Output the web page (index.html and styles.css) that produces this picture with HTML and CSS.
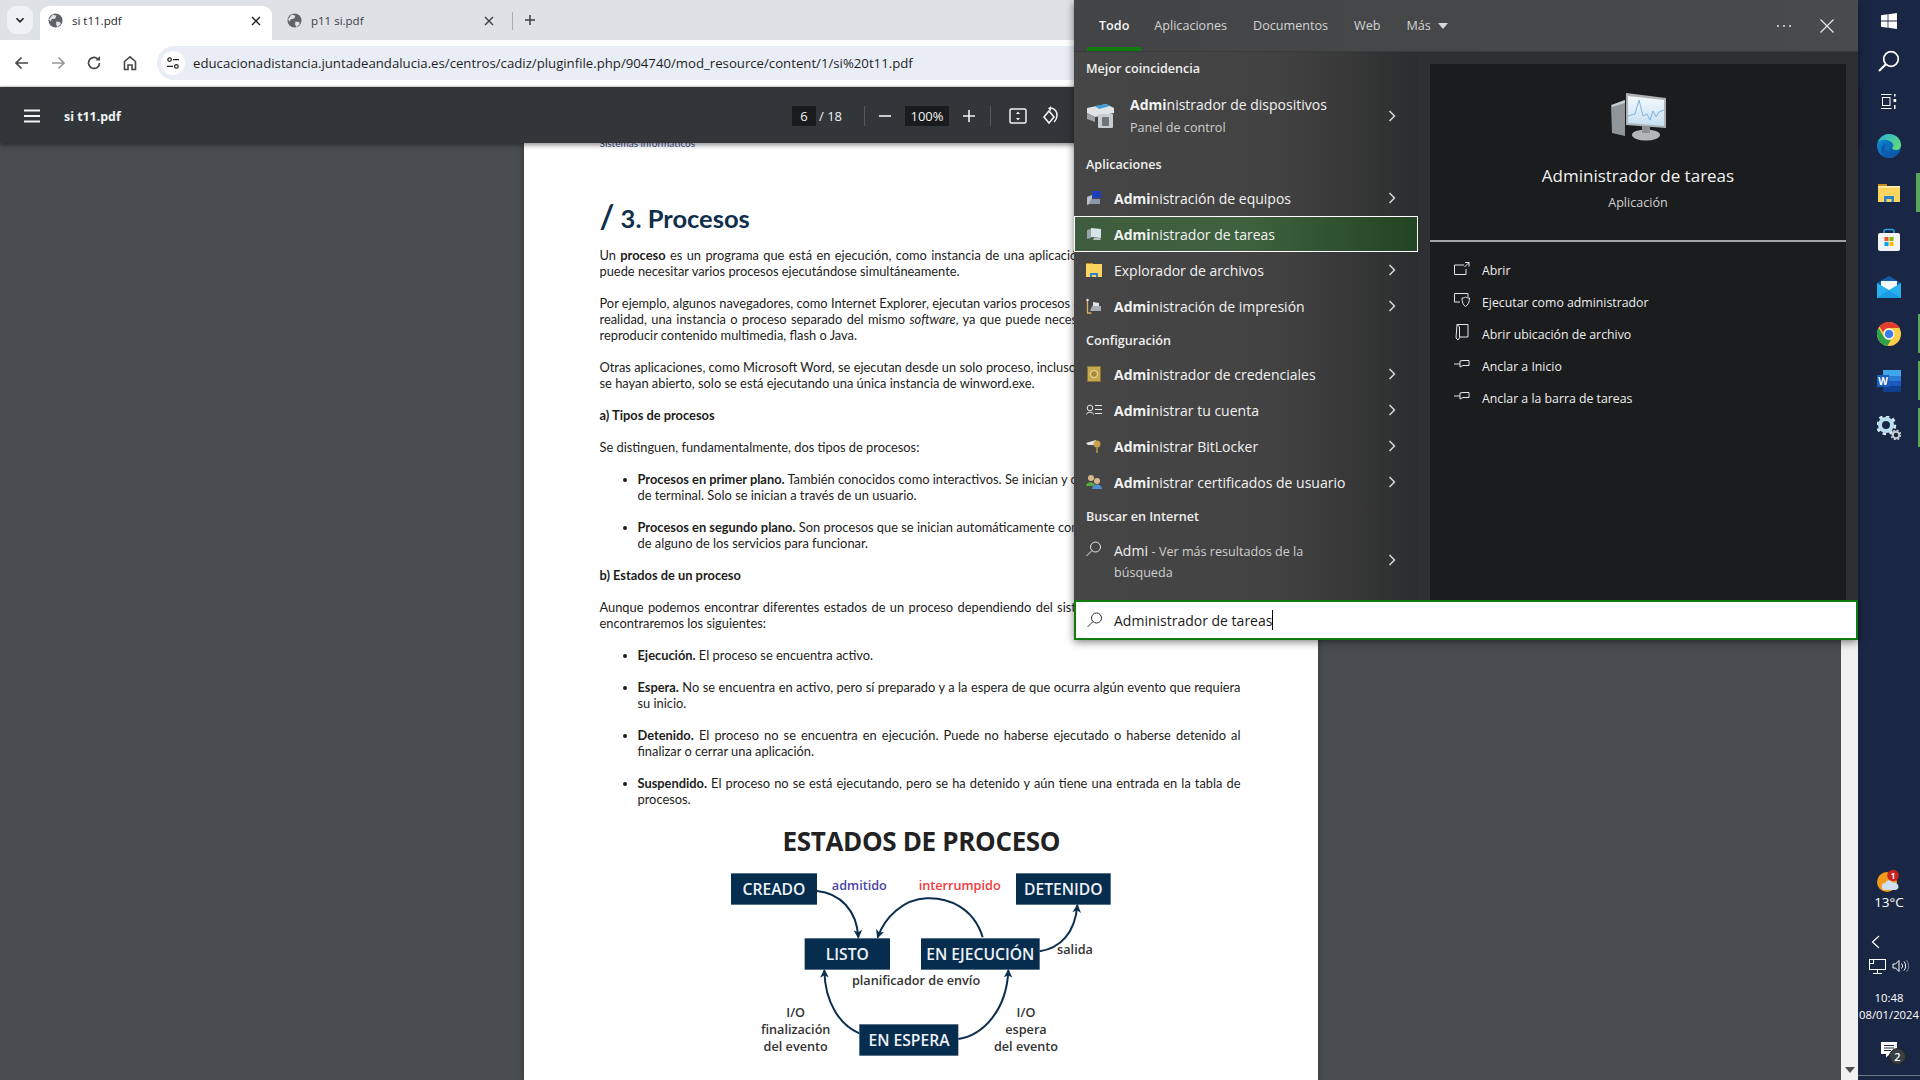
FILE: index.html
```html
<!DOCTYPE html>
<html lang="es">
<head>
    <meta charset="utf-8">
    <title>si t11.pdf</title>
    <link rel="stylesheet" href="styles.css">
</head>
<body>
<div class="desktop">
    <div class="browser">
        <!-- tab strip -->
        <div class="tabstrip">
            <div class="tab-list-btn">
                <svg width="10" height="10" viewBox="0 0 10 10"><path d="M1.500 3.200 5 6.800l3.500-3.600" fill="none" stroke="#1f1f1f" stroke-width="1.600"/></svg>
            </div>
            <div class="tab tab-active">
                <svg class="globe" width="15" height="15" viewBox="0 0 16 16"><circle cx="8" cy="8" r="7.500" fill="#5f6368"/><path d="M5 1.500 9 3 7.500 6 4 6.500 3 9 1 7zM9 9l4 .5.5 2.500L10 15 8.500 12z" fill="#dfe2e6"/></svg>
                <span class="tab-title">si t11.pdf</span>
                <svg class="tab-close" width="10" height="10" viewBox="0 0 10 10"><path d="M1 1l8 8M9 1 1 9" stroke="#1f1f1f" stroke-width="1.400"/></svg>
            </div>
            <div class="tab">
                <svg class="globe" width="15" height="15" viewBox="0 0 16 16"><circle cx="8" cy="8" r="7.500" fill="#5f6368"/><path d="M5 1.500 9 3 7.500 6 4 6.500 3 9 1 7zM9 9l4 .5.5 2.500L10 15 8.500 12z" fill="#dfe2e6"/></svg>
                <span class="tab-title">p11 si.pdf</span>
                <svg class="tab-close" width="10" height="10" viewBox="0 0 10 10"><path d="M1 1l8 8M9 1 1 9" stroke="#3c4043" stroke-width="1.400"/></svg>
            </div>
            <div class="tab-sep"></div>
            <svg class="new-tab" width="12" height="12" viewBox="0 0 12 12"><path d="M6 1v10M1 6h10" stroke="#3c4043" stroke-width="1.500"/></svg>
        </div>

        <!-- address bar -->
        <div class="navbar">
            <svg class="nav-icon nav-back" width="16" height="16" viewBox="0 0 16 16"><path d="M14 8H2.500M7.500 2.500 2 8l5.500 5.500" fill="none" stroke="#474747" stroke-width="1.700"/></svg>
            <svg class="nav-icon" width="16" height="16" viewBox="0 0 16 16"><path d="M2 8h11.500M8.500 2.500 14 8l-5.500 5.500" fill="none" stroke="#9a9a9a" stroke-width="1.700"/></svg>
            <svg class="nav-icon" width="16" height="16" viewBox="0 0 16 16"><path d="M13.500 8A5.500 5.500 0 1 1 11.600 3.800" fill="none" stroke="#474747" stroke-width="1.700"/><path d="M9.500 5.500h4.500V1z" fill="#474747"/></svg>
            <svg class="nav-icon" width="16" height="16" viewBox="0 0 16 16"><path d="M2.500 14.500V6.500L8 1.800l5.500 4.700v8H10V10H6v4.500z" fill="none" stroke="#474747" stroke-width="1.600"/></svg>
            <div class="omnibox">
                <div class="site-btn">
                    <svg width="14" height="14" viewBox="0 0 14 14"><circle cx="3.600" cy="3.600" r="1.800" fill="none" stroke="#1f1f1f" stroke-width="1.200"/><circle cx="10.400" cy="10.400" r="1.800" fill="none" stroke="#1f1f1f" stroke-width="1.200"/><path d="M7 3.600h6M1 10.400h6" stroke="#1f1f1f" stroke-width="1.200"/></svg>
                </div>
                <span class="url">educacionadistancia.juntadeandalucia.es/centros/cadiz/pluginfile.php/904740/mod_resource/content/1/si%20t11.pdf</span>
            </div>
        </div>

        <!-- pdf viewer toolbar -->
        <div class="pdf-toolbar">
            <svg class="hamburger" width="16" height="14" viewBox="0 0 16 14"><path d="M0 1.500h16M0 7h16M0 12.500h16" stroke="#f1f3f4" stroke-width="2"/></svg>
            <span class="pdf-name">si t11.pdf</span>
            <div class="pdf-controls">
                <span class="pdf-field pdf-page-num">6</span>
                <span class="pdf-total">/ 18</span>
                <span class="pdf-sep"></span>
                <svg width="12" height="12" viewBox="0 0 12 12"><path d="M0 6h12" stroke="#f1f3f4" stroke-width="1.600"/></svg>
                <span class="pdf-field pdf-zoom">100%</span>
                <svg width="12" height="12" viewBox="0 0 12 12"><path d="M0 6h12M6 0v12" stroke="#f1f3f4" stroke-width="1.600"/></svg>
                <span class="pdf-sep pdf-sep-2"></span>
                <svg class="fit-icon" width="18" height="16" viewBox="0 0 18 16"><rect x="1" y="1" width="16" height="14" rx="1.500" fill="none" stroke="#f1f3f4" stroke-width="1.500"/><path d="M9 3.500 7 6h4zM9 12.500 7 10h4z" fill="#f1f3f4"/></svg>
                <svg class="rotate-icon" width="18" height="20" viewBox="0 0 18 20"><path d="M8 5 3 11l5 6 5-6z" fill="none" stroke="#f1f3f4" stroke-width="1.600"/><path d="M10 2c4 .5 6.500 4 6 8s-2 5-3 6" fill="none" stroke="#f1f3f4" stroke-width="1.500"/><path d="M10 0v5L7 2.500z" fill="#f1f3f4"/></svg>
            </div>
        </div>

        <div class="pdf-area">
            <div class="viewer">
                <div class="page">
                    <div class="page-header">Sistemas informáticos</div>
                    <h1 class="page-title"><span class="slash">/</span> 3. Procesos</h1>

                    <p><span class="ln ws-a">Un <b>proceso</b> es un programa que está en ejecución, como instancia de una aplicación.</span>
                       <span class="ln">puede necesitar varios procesos ejecutándose simultáneamente.</span></p>

                    <p><span class="ln">Por ejemplo, algunos navegadores, como Internet Explorer, ejecutan varios procesos en</span>
                       <span class="ln ws-a">realidad, una instancia o proceso separado del mismo <i>software</i>, ya que puede necesitar</span>
                       <span class="ln">reproducir contenido multimedia, flash o Java.</span></p>

                    <p><span class="ln">Otras aplicaciones, como Microsoft Word, se ejecutan desde un solo proceso, incluso si</span>
                       <span class="ln">se hayan abierto, solo se está ejecutando una única instancia de winword.exe.</span></p>

                    <p><b>a) Tipos de procesos</b></p>

                    <p>Se distinguen, fundamentalmente, dos tipos de procesos:</p>

                    <ul>
                        <li><span class="ln"><b>Procesos en primer plano.</b> También conocidos como interactivos. Se inician y con</span>
                            <span class="ln">de terminal. Solo se inician a través de un usuario.</span></li>
                        <li><span class="ln"><b>Procesos en segundo plano.</b> Son procesos que se inician automáticamente como</span>
                            <span class="ln">de alguno de los servicios para funcionar.</span></li>
                    </ul>

                    <p><b>b) Estados de un proceso</b></p>

                    <p><span class="ln ws-a">Aunque podemos encontrar diferentes estados de un proceso dependiendo del sistema</span>
                       <span class="ln">encontraremos los siguientes:</span></p>

                    <ul>
                        <li><b>Ejecución.</b> El proceso se encuentra activo.</li>
                        <li><span class="ln-just"><b>Espera.</b> No se encuentra en activo, pero sí preparado y a la espera de que ocurra algún evento que requiera</span>
                            <span class="ln">su inicio.</span></li>
                        <li><span class="ln-just"><b>Detenido.</b> El proceso no se encuentra en ejecución. Puede no haberse ejecutado o haberse detenido al</span>
                            <span class="ln">finalizar o cerrar una aplicación.</span></li>
                        <li><span class="ln-just"><b>Suspendido.</b> El proceso no se está ejecutando, pero se ha detenido y aún tiene una entrada en la tabla de</span>
                            <span class="ln">procesos.</span></li>
                    </ul>

                    <svg class="diagram" width="450" height="270" viewBox="0 0 1350 810">
                        <defs>
                            <marker id="arrow" markerWidth="26" markerHeight="26" refX="22" refY="13" orient="auto" markerUnits="userSpaceOnUse">
                                <path d="M0 0 26 13 0 26 7 13z" fill="#0c2f4f"/>
                            </marker>
                        </defs>
                        <text class="dg-title" x="664" y="122" text-anchor="middle">ESTADOS DE PROCESO</text>

                        <g class="dg-lines">
                            <path d="M351 243C420 250 470 300 475 382" marker-end="url(#arrow)"/>
                            <path d="M848 382C820 290 740 262 680 265C610 268 555 320 533 382" marker-end="url(#arrow)"/>
                            <path d="M1019 424C1080 415 1125 370 1132 286" marker-end="url(#arrow)"/>
                            <path d="M478 670C420 645 375 580 373 481" marker-end="url(#arrow)"/>
                            <path d="M775 687C850 675 920 600 925 481" marker-end="url(#arrow)"/>
                        </g>

                        <rect class="dg-box" x="93" y="190" width="258" height="94"/>
                        <rect class="dg-box" x="948" y="190" width="284" height="94"/>
                        <rect class="dg-box" x="314" y="385" width="256" height="94"/>
                        <rect class="dg-box" x="663" y="385" width="356" height="94"/>
                        <rect class="dg-box" x="478" y="643" width="297" height="94"/>

                        <text class="dg-box-label" x="222" y="256" text-anchor="middle">CREADO</text>
                        <text class="dg-box-label" x="1090" y="256" text-anchor="middle">DETENIDO</text>
                        <text class="dg-box-label" x="442" y="451" text-anchor="middle">LISTO</text>
                        <text class="dg-box-label" x="841" y="451" text-anchor="middle">EN EJECUCIÓN</text>
                        <text class="dg-box-label" x="627" y="709" text-anchor="middle">EN ESPERA</text>

                        <text class="dg-label dg-blue" x="478" y="241" text-anchor="middle">admitido</text>
                        <text class="dg-label dg-red" x="779" y="241" text-anchor="middle">interrumpido</text>
                        <text class="dg-label" x="1125" y="431" text-anchor="middle">salida</text>
                        <text class="dg-label" x="648" y="525" text-anchor="middle">planificador de envío</text>
                        <text class="dg-label" x="287" y="620" text-anchor="middle">I/O</text>
                        <text class="dg-label" x="287" y="672" text-anchor="middle">finalización</text>
                        <text class="dg-label" x="287" y="724" text-anchor="middle">del evento</text>
                        <text class="dg-label" x="978" y="620" text-anchor="middle">I/O</text>
                        <text class="dg-label" x="978" y="672" text-anchor="middle">espera</text>
                        <text class="dg-label" x="978" y="724" text-anchor="middle">del evento</text>
                    </svg>
                </div>
            </div>
            <div class="scrollbar">
                <svg width="10" height="6" viewBox="0 0 10 6"><path d="M0 0h10L5 6z" fill="#505050"/></svg>
            </div>
        </div>
    </div>

    <!-- vertical taskbar -->
    <aside class="taskbar">
        <div class="tb-top">
            <div class="tb-btn tb-small">
                <svg width="16" height="16" viewBox="0 0 16 16"><path d="M0 2.300 6.600 1.300V7.600H0zM7.400 1.200 16 0V7.600H7.400zM0 8.400H6.600V14.700L0 13.700zM7.400 8.400H16V16L7.400 14.800z" fill="#fff"/></svg>
            </div>
            <div class="tb-btn tb-small">
                <svg width="22" height="22" viewBox="0 0 22 22"><circle cx="13" cy="9" r="7.300" fill="none" stroke="#fff" stroke-width="1.700"/><path d="M7.800 14.200 1 21" stroke="#fff" stroke-width="2"/></svg>
            </div>
            <div class="tb-btn tb-view">
                <svg width="16" height="15" viewBox="0 0 16 15"><path d="M0 .5h10.500M0 14.500h10.500" stroke="#fff"/><rect x="1.500" y="3.500" width="7.500" height="8" fill="none" stroke="#fff"/><rect x="13" y="0" width="1.500" height="2.500" fill="#fff"/><rect x="12.500" y="5" width="2.700" height="3" fill="#fff"/><rect x="13" y="11" width="1.500" height="4" fill="#fff"/></svg>
            </div>
            <div class="tb-btn">
                <svg width="24" height="24" viewBox="0 0 24 24">
                    <defs>
                        <linearGradient id="edgeA" x1="0" y1="0" x2="1" y2="1"><stop offset="0" stop-color="#2bb3d8"/><stop offset="1" stop-color="#6be06c"/></linearGradient>
                        <linearGradient id="edgeB" x1="0" y1="0" x2="1" y2="1"><stop offset="0" stop-color="#0f8fd1"/><stop offset="1" stop-color="#0a4fa6"/></linearGradient>
                    </defs>
                    <circle cx="12" cy="12" r="12" fill="url(#edgeB)"/>
                    <path d="M1 8C4 2 8 0 12 0c7 0 12 5 12 11 0 3-2 5-5 5-2 0-4-1-4-2 1-1 2-2 1-4C14 6 6 4 1 8z" fill="url(#edgeA)"/>
                    <path d="M16 14c-1 3-4 4-6 3-3-1-3-5 0-7-4 0-6 3-6 6 0 4 4 8 9 8 2 0 4-1 5-2-2 0-3-3-2-8z" fill="#0b5cb0"/>
                </svg>
            </div>
            <div class="tb-btn tb-open">
                <svg width="22" height="20" viewBox="0 0 22 20"><path d="M0 1h9v3H0z" fill="#c98a14"/><rect y="3" width="22" height="16" fill="#fcd45f"/><rect y="3" width="22" height="1.500" fill="#fff2b8"/><path d="M6 19v-6h10v6h-2.500v-3h-5v3z" fill="#2f7fc9"/></svg>
            </div>
            <div class="tb-btn">
                <svg width="24" height="24" viewBox="0 0 24 24"><path d="M7 7V3.500C7 2 8 1.500 9 1.500h6c1 0 2 .5 2 2V7" fill="none" stroke="#2a9fe0" stroke-width="1.600"/><rect x="1" y="5" width="22" height="18" rx="2" fill="#f3f3f3"/><rect x="7.500" y="9" width="4" height="4" fill="#f25022"/><rect x="12.500" y="9" width="4" height="4" fill="#7fba00"/><rect x="7.500" y="14" width="4" height="4" fill="#00a4ef"/><rect x="12.500" y="14" width="4" height="4" fill="#ffb900"/></svg>
            </div>
            <div class="tb-btn">
                <svg width="24" height="24" viewBox="0 0 24 24"><path d="M12 1 24 8v4H0V8z" fill="#0f5da8"/><path d="M4 6h16v8l-8 4-8-4z" fill="#f4f8fb"/><path d="M0 8l12 7 12-7v15H0z" fill="#29b0ef"/><path d="M0 23l12-8 12 8z" fill="#1c9be0"/></svg>
            </div>
            <div class="tb-btn tb-open tb-open-thin">
                <svg width="24" height="24" viewBox="0 0 24 24"><circle cx="12" cy="12" r="12" fill="#ffce44"/><path d="M12 0a12 12 0 0 1 10.400 6H12a6 6 0 0 0-5.800 4.400L2.500 4.500A12 12 0 0 1 12 0z" fill="#e33b2e"/><path d="M1.600 6 7 15a6 6 0 0 0 7 2.700l-3.500 6.200A12 12 0 0 1 1.600 6z" fill="#2fa34c"/><circle cx="12" cy="12" r="5.500" fill="#fff"/><circle cx="12" cy="12" r="4.300" fill="#3b7de8"/></svg>
            </div>
            <div class="tb-btn tb-open tb-open-thin">
                <svg width="24" height="22" viewBox="0 0 24 22"><rect x="6" y="0" width="18" height="6" fill="#41a5ee"/><rect x="6" y="6" width="18" height="5" fill="#2b7cd3"/><rect x="6" y="11" width="18" height="5" fill="#185abd"/><rect x="6" y="16" width="18" height="6" fill="#103f91"/><rect x="0" y="5" width="12" height="12" fill="#1a5dbd"/><text class="word-w" x="6" y="15" text-anchor="middle">W</text></svg>
            </div>
            <div class="tb-btn tb-open tb-open-thin">
                <svg width="24" height="24" viewBox="0 0 24 24"><circle cx="9" cy="9" r="6" fill="none" stroke="#b9dcef" stroke-width="4"/><circle cx="9" cy="9" r="9" fill="none" stroke="#d8ecf6" stroke-width="2.500" stroke-dasharray="3.500 3.500"/><circle cx="19" cy="19" r="3.200" fill="none" stroke="#c3c9cf" stroke-width="2"/><circle cx="19" cy="19" r="4.700" fill="none" stroke="#c3c9cf" stroke-width="1.500" stroke-dasharray="2 1.700"/></svg>
            </div>
        </div>

        <div class="tb-bottom">
            <div class="weather">
                <svg width="26" height="26" viewBox="0 0 26 26"><circle cx="11" cy="13" r="10" fill="#f39a1c"/><path d="M9 21a3.500 3.500 0 0 1 .5-7c.5-3 5.500-4 7-.5 3.500-.5 6 1.500 6 4 0 2-1.500 3.500-3.500 3.500z" fill="#cfe0f5"/><circle cx="17" cy="6.500" r="5.800" fill="#c8231d"/><text class="weather-badge" x="17" y="9.500" text-anchor="middle">1</text></svg>
                <span>13°C</span>
            </div>
            <svg class="tray-chevron" width="9" height="14" viewBox="0 0 9 14"><path d="M8 1 1.500 7 8 13" fill="none" stroke="#fff" stroke-width="1.200"/></svg>
            <div class="tray">
                <svg width="17" height="15" viewBox="0 0 17 15"><rect x=".5" y=".5" width="16" height="10" fill="none" stroke="#fff"/><rect x=".5" y=".5" width="4" height="4" fill="#1a2744" stroke="#fff"/><path d="M8.500 10.500v3.500M4 14.500h9" stroke="#fff"/></svg>
                <svg width="17" height="14" viewBox="0 0 17 14"><path d="M1 5h2.500L7 1.500v11L3.500 9H1z" fill="none" stroke="#fff"/><path d="M9.500 4.500a3.500 3.500 0 0 1 0 5M12 2.500a7 7 0 0 1 0 9" fill="none" stroke="#fff"/><path d="M14.500 1a9.500 9.500 0 0 1 0 12" fill="none" stroke="#7c8699"/></svg>
            </div>
            <div class="clock">10:48<br>08/01/2024</div>
            <div class="notify">
                <svg width="16" height="16" viewBox="0 0 16 16"><path d="M0 0h16v12H9l-4 3.500V12H0z" fill="#fff"/><path d="M3 3.500h10M3 6h10M3 8.500h7" stroke="#1a2744"/></svg>
                <span class="notify-count">2</span>
            </div>
        </div>
    </aside>

    <!-- windows search flyout, lies over the browser -->
    <section class="search">
        <div class="search-head">
            <span class="stab stab-on">Todo</span>
            <span class="stab">Aplicaciones</span>
            <span class="stab">Documentos</span>
            <span class="stab">Web</span>
            <span class="stab">Más <svg class="caret" width="10" height="6" viewBox="0 0 10 6"><path d="M0 0h10L5 6z" fill="#d6d6d6"/></svg></span>
            <svg class="head-dots" width="16" height="4" viewBox="0 0 16 4"><circle cx="2" cy="2" r="1" fill="#e4e4e4"/><circle cx="8" cy="2" r="1" fill="#e4e4e4"/><circle cx="14" cy="2" r="1" fill="#e4e4e4"/></svg>
            <svg class="head-close" width="14" height="14" viewBox="0 0 14 14"><path d="M.5.500l13 13M13.500.500l-13 13" stroke="#e8e8e8" stroke-width="1.200"/></svg>
        </div>

        <div class="search-body">
            <div class="results">
                <div class="res-section">Mejor coincidencia</div>
                <div class="res-row res-best">
                    <svg class="res-icon-big" width="30" height="26" viewBox="0 0 30 26"><path d="M1 5 20 1l8 4v5L9 14 1 10z" fill="#dfe3e6"/><path d="M9 3l11-2 4 2-11 3z" fill="#3f9bd8"/><path d="M1 10l8 4v5l-8-3z" fill="#9aa2a8"/><rect x="12" y="11" width="15" height="14" rx="1" fill="#c8ccd0"/><rect x="16" y="14" width="7" height="9" rx="1" fill="#6d7378"/></svg>
                    <div class="res-text">
                        <div class="res-name"><b>Admi</b>nistrador de dispositivos</div>
                        <div class="res-sub">Panel de control</div>
                    </div>
                    <svg class="chev" width="8" height="12" viewBox="0 0 8 12"><path d="M1.500 1 6.500 6l-5 5" fill="none" stroke="#d8d8d8" stroke-width="1.500"/></svg>
                </div>

                <div class="res-section">Aplicaciones</div>
                <div class="res-row">
                    <svg class="res-icon" width="16" height="16" viewBox="0 0 16 16"><rect x="6" y="1" width="9" height="7" fill="#1f3fb8"/><path d="M1 7l5-2v8l-5 2z" fill="#b9c2cc"/><path d="M5 9h9v5H3z" fill="#8c99a8"/></svg>
                    <span class="res-name"><b>Admi</b>nistración de equipos</span>
                    <svg class="chev" width="8" height="12" viewBox="0 0 8 12"><path d="M1.500 1 6.500 6l-5 5" fill="none" stroke="#d8d8d8" stroke-width="1.500"/></svg>
                </div>
                <div class="res-row res-selected">
                    <svg class="res-icon" width="16" height="14" viewBox="0 0 16 14"><path d="M5 1l10 1v9L5 10z" fill="#d7e3ea"/><path d="M1 3l4-1v9l-4 1z" fill="#9aa4ab"/><path d="M8 11h6l1 2H7z" fill="#b8bdc1"/></svg>
                    <span class="res-name"><b>Admi</b>nistrador de tareas</span>
                </div>
                <div class="res-row">
                    <svg class="res-icon" width="16" height="14" viewBox="0 0 16 14"><path d="M0 0h7v2H0z" fill="#c98a14"/><rect y="1" width="16" height="13" fill="#fcd45f"/><path d="M4 14v-4h8v4h-2v-2H6v2z" fill="#2f7fc9"/></svg>
                    <span class="res-name">Explorador de archivos</span>
                    <svg class="chev" width="8" height="12" viewBox="0 0 8 12"><path d="M1.500 1 6.500 6l-5 5" fill="none" stroke="#d8d8d8" stroke-width="1.500"/></svg>
                </div>
                <div class="res-row">
                    <svg class="res-icon" width="16" height="16" viewBox="0 0 16 16"><path d="M1.500 1v14h4" fill="none" stroke="#d8b35a" stroke-width="1.300"/><circle cx="1.500" cy="2" r="1.200" fill="#e9e9e9"/><path d="M6 8h9v5H4z" fill="#a7afb5"/><path d="M7 4l6 1v3H7z" fill="#e3e6e8"/></svg>
                    <span class="res-name"><b>Admi</b>nistración de impresión</span>
                    <svg class="chev" width="8" height="12" viewBox="0 0 8 12"><path d="M1.500 1 6.500 6l-5 5" fill="none" stroke="#d8d8d8" stroke-width="1.500"/></svg>
                </div>

                <div class="res-section">Configuración</div>
                <div class="res-row">
                    <svg class="res-icon" width="14" height="16" viewBox="0 0 14 16"><rect x=".5" y=".5" width="13" height="15" fill="#c8a94f" stroke="#8c7430"/><circle cx="7" cy="8" r="3.500" fill="#a88a36" stroke="#efe2ac"/></svg>
                    <span class="res-name"><b>Admi</b>nistrador de credenciales</span>
                    <svg class="chev" width="8" height="12" viewBox="0 0 8 12"><path d="M1.500 1 6.500 6l-5 5" fill="none" stroke="#d8d8d8" stroke-width="1.500"/></svg>
                </div>
                <div class="res-row">
                    <svg class="res-icon" width="16" height="12" viewBox="0 0 16 12"><circle cx="4" cy="4" r="2.800" fill="none" stroke="#e8e8e8"/><path d="M.5 10.500c0-3 7-3 7 0M9 1.500h7M9 5.500h7M9 9.500h7" fill="none" stroke="#e8e8e8"/></svg>
                    <span class="res-name"><b>Admi</b>nistrar tu cuenta</span>
                    <svg class="chev" width="8" height="12" viewBox="0 0 8 12"><path d="M1.500 1 6.500 6l-5 5" fill="none" stroke="#d8d8d8" stroke-width="1.500"/></svg>
                </div>
                <div class="res-row">
                    <svg class="res-icon" width="16" height="16" viewBox="0 0 16 16"><path d="M0 5l10-3v5L2 7z" fill="#e6e6e6"/><circle cx="11" cy="6" r="3.500" fill="#c9a24a"/><path d="M10 9h2v6h-2z" fill="#9c8240"/></svg>
                    <span class="res-name"><b>Admi</b>nistrar BitLocker</span>
                    <svg class="chev" width="8" height="12" viewBox="0 0 8 12"><path d="M1.500 1 6.500 6l-5 5" fill="none" stroke="#d8d8d8" stroke-width="1.500"/></svg>
                </div>
                <div class="res-row">
                    <svg class="res-icon" width="16" height="16" viewBox="0 0 16 16"><circle cx="5" cy="4" r="3" fill="#d9b98c"/><path d="M0 12c0-5 9-5 9 0z" fill="#5aa83e"/><circle cx="11" cy="7" r="3" fill="#d9b98c"/><path d="M6 15c0-6 10-6 10 0z" fill="#4f8fd0"/></svg>
                    <span class="res-name"><b>Admi</b>nistrar certificados de usuario</span>
                    <svg class="chev" width="8" height="12" viewBox="0 0 8 12"><path d="M1.500 1 6.500 6l-5 5" fill="none" stroke="#d8d8d8" stroke-width="1.500"/></svg>
                </div>

                <div class="res-section">Buscar en Internet</div>
                <div class="res-row res-web">
                    <svg class="res-icon" width="16" height="16" viewBox="0 0 16 16"><circle cx="9.500" cy="6" r="5" fill="none" stroke="#e8e8e8"/><path d="M6 9.500.5 15" stroke="#e8e8e8"/></svg>
                    <div class="res-name">Admi <span class="res-more">- Ver más resultados de la búsqueda</span></div>
                    <svg class="chev" width="8" height="12" viewBox="0 0 8 12"><path d="M1.500 1 6.500 6l-5 5" fill="none" stroke="#d8d8d8" stroke-width="1.500"/></svg>
                </div>
            </div>

            <div class="preview">
                <div class="preview-top">
                    <svg class="preview-icon" width="58" height="50" viewBox="0 0 58 50">
                        <defs><linearGradient id="scr" x1="0" y1="0" x2="0" y2="1"><stop offset="0" stop-color="#f4f9fd"/><stop offset="1" stop-color="#c6e0f2"/></linearGradient></defs>
                        <path d="M2 13 16 8v36L3 41z" fill="#8f9598"/>
                        <path d="M3 13l13-5v3L3 15z" fill="#c7ccce"/>
                        <path d="M17 1 57 6v30L17 33z" fill="#aeb3b6"/>
                        <path d="M19 4 55 8v26L19 31z" fill="url(#scr)"/>
                        <path d="M19 24l7-2 4-14 4 16 4-2 3 6 3-9 3 6 3-5 5-2" fill="none" stroke="#7fb4dc" stroke-width="1"/>
                        <ellipse cx="37" cy="43" rx="14" ry="5.500" fill="#b3b6b8"/>
                        <path d="M33 34h8v7h-8z" fill="#8d9194"/>
                    </svg>
                    <div class="preview-title">Administrador de tareas</div>
                    <div class="preview-sub">Aplicación</div>
                </div>
                <div class="preview-actions">
                    <div class="act">
                        <svg width="16" height="13" viewBox="0 0 16 13"><path d="M10 3H.5v9.500H12V7" fill="none" stroke="#e6e6e6"/><path d="M10.500 5 15 .5M11 .5h4v4" fill="none" stroke="#e6e6e6"/></svg>
                        <span>Abrir</span>
                    </div>
                    <div class="act">
                        <svg width="16" height="14" viewBox="0 0 16 14"><path d="M6 9H.5V.5H14V4" fill="none" stroke="#e6e6e6"/><path d="M8 5c2 0 3-.5 3.500-1 .5.500 1.500 1 4 1 0 4-1.500 7-4 8.500C9 12 8 9 8 5z" fill="none" stroke="#e6e6e6"/></svg>
                        <span>Ejecutar como administrador</span>
                    </div>
                    <div class="act">
                        <svg width="14" height="17" viewBox="0 0 14 17"><path d="M2 .5h11V13H5L3 16l-2-2z" fill="none" stroke="#e6e6e6"/><path d="M2 .5 4.500 3v10" fill="none" stroke="#e6e6e6"/></svg>
                        <span>Abrir ubicación de archivo</span>
                    </div>
                    <div class="act">
                        <svg width="16" height="10" viewBox="0 0 16 10"><path d="M0 5h6M6 2v6l3-1.500h6v-5H9z" fill="none" stroke="#e6e6e6"/></svg>
                        <span>Anclar a Inicio</span>
                    </div>
                    <div class="act">
                        <svg width="16" height="10" viewBox="0 0 16 10"><path d="M0 5h6M6 2v6l3-1.500h6v-5H9z" fill="none" stroke="#e6e6e6"/></svg>
                        <span>Anclar a la barra de tareas</span>
                    </div>
                </div>
            </div>
        </div>

        <div class="search-input">
            <svg width="16" height="16" viewBox="0 0 16 16"><circle cx="9.500" cy="6" r="5" fill="none" stroke="#333"/><path d="M6 9.500.5 15" stroke="#333"/></svg>
            <span class="search-text">Administrador de tareas</span><span class="search-caret"></span>
        </div>
    </section>
</div>
</body>
</html>
```

FILE: styles.css
```css
* {
    box-sizing: border-box;
}
html, body {
    margin: 0;
    padding: 0;
    height: 100%;
    overflow: hidden;
}
body {
    font-family: "Open Sans", "Noto Sans", sans-serif;
}
.desktop {
    position: relative;
    display: flex;
    width: 1920px;
    height: 1080px;
    overflow: hidden;
}
.browser {
    flex: 1;
    display: flex;
    flex-direction: column;
    min-width: 0;
}

/* tabs */
.tabstrip {
    display: flex;
    align-items: flex-end;
    height: 40px;
    background: #dee1e6;
    padding-left: 7px;
}
.tab-list-btn {
    width: 26px;
    height: 28px;
    margin-bottom: 6px;
    background: #eef0f3;
    border-radius: 9px;
    display: flex;
    align-items: center;
    justify-content: center;
}
.tab {
    width: 232px;
    height: 34px;
    margin-left: 7px;
    padding: 0 11px 5px 8px;
    display: flex;
    align-items: center;
    font-size: 11.5px;
    color: #3c4043;
    border-radius: 9px 9px 0 0;
}
.tab-active {
    background: #fff;
    color: #1f1f1f;
}
.tab + .tab {
    width: 226px;
    margin-left: 7px;
}
.tab-title {
    margin-left: 9px;
    flex: 1;
}
.tab-sep {
    width: 1px;
    height: 18px;
    margin: 0 0 10px 7px;
    background: #a9adb3;
}
.new-tab {
    margin: 0 0 14px 11px;
}

/* address bar */
.navbar {
    height: 47px;
    background: #fff;
    border-bottom: 1px solid #e0e0e0;
    display: flex;
    align-items: center;
    padding-left: 14px;
}
.nav-icon {
    margin-right: 20px;
}
.omnibox {
    margin-left: -1px;
    flex: 1;
    height: 34px;
    background: #e9edf6;
    border-radius: 17px 0 0 17px;
    display: flex;
    align-items: center;
    padding-left: 4px;
}
.site-btn {
    width: 24px;
    height: 24px;
    border-radius: 50%;
    background: #fff;
    display: flex;
    align-items: center;
    justify-content: center;
}
.url {
    margin-left: 8px;
    font-size: 13.2px;
    color: #1f1f1f;
    white-space: nowrap;
}

/* pdf toolbar */
.pdf-toolbar {
    position: relative;
    z-index: 2;
    height: 56px;
    background: #323639;
    box-shadow: 0 2px 5px rgba(0, 0, 0, .45);
    display: flex;
    align-items: center;
    color: #f1f3f4;
    padding: 2px 0 0 24px;
}
.pdf-name {
    margin-left: 24px;
    font-size: 12.4px;
    font-weight: 700;
    width: 128px;
}
.pdf-controls {
    margin-left: 600px;
    display: flex;
    align-items: center;
    font-size: 13px;
}
.pdf-field {
    height: 20px;
    background: #191b1c;
    display: flex;
    align-items: center;
    justify-content: center;
}
.pdf-page-num {
    width: 24px;
}
.pdf-total {
    margin-left: 3px;
    width: 27px;
    white-space: nowrap;
}
.pdf-sep {
    width: 1px;
    height: 20px;
    background: #55595c;
    margin: 0 14px 0 18px;
}
.pdf-sep-2 {
    margin: 0 18px 0 15px;
}
.pdf-zoom {
    width: 44px;
    margin: 0 14px;
}
.rotate-icon {
    margin-left: 14px;
}

/* document */
.pdf-area {
    flex: 1;
    display: flex;
    min-height: 0;
}
.viewer {
    flex: 1;
    background: #494d50;
    overflow: hidden;
    display: flex;
    justify-content: center;
}
.scrollbar {
    width: 17px;
    background: #f1f1f1;
    display: flex;
    flex-direction: column;
    justify-content: flex-end;
    align-items: center;
    padding-bottom: 7px;
}
.page {
    width: 794px;
    height: 940px;
    background: #fff;
    padding: 0 77px 0 76px;
    font-family: Lato, "Open Sans", sans-serif;
    font-size: 12.85px;
    line-height: 16px;
    color: #1d1d1b;
    white-space: nowrap;
    box-shadow: 0 0 6px rgba(0, 0, 0, .3);
}
.page-header {
    margin-top: -8px;
    font-size: 10px;
    color: #3b4a8a;
    height: 16px;
}
.page-title {
    margin: 47px 0 11px;
    font-size: 25.5px;
    line-height: 36px;
    font-weight: 700;
    color: #0f2f4c;
}
.slash {
    font-weight: 700;
    font-size: 32px;
}
.page p {
    margin: 0 0 16px;
}
.ln {
    display: block;
}
.ln-just {
    display: block;
    white-space: normal;
    height: 16px;
    text-align: justify;
    text-align-last: justify;
}
.ws-a {
    word-spacing: 1.1px;
}
.page ul {
    margin: 0;
    padding: 0 0 0 38px;
}
.page li {
    margin-bottom: 16px;
}
.diagram {
    display: block;
    margin: -13px 0 0 100px;
}

/* diagram */
.dg-title {
    font-family: "Open Sans", sans-serif;
    font-size: 78px;
    font-weight: 700;
    fill: #222;
    letter-spacing: -1px;
}
.dg-lines path {
    fill: none;
    stroke: #0c2f4f;
    stroke-width: 6;
}
.dg-box {
    fill: #062d4e;
}
.dg-box-label {
    font-family: "Open Sans", sans-serif;
    font-size: 47px;
    font-weight: 600;
    fill: #eef3f7;
}
.dg-label {
    font-family: "Open Sans", sans-serif;
    font-size: 38px;
    font-weight: 600;
    fill: #333;
}
.dg-blue {
    fill: #4a45a8;
}
.dg-red {
    fill: #f33a3a;
}

/* taskbar */
.taskbar {
    width: 62px;
    background: #1a2744;
    display: flex;
    flex-direction: column;
    justify-content: space-between;
    color: #fff;
    border-bottom: 1px solid #6d7689;
    margin-bottom: 4px;
    height: 1076px;
    box-shadow: 0 4px 0 #1a2744;
}
.tb-top {
    padding-top: 1px;
}
.tb-btn {
    position: relative;
    height: 47px;
    display: flex;
    align-items: center;
    justify-content: center;
}
.tb-small {
    height: 40px;
}
.tb-view {
    height: 41px;
}
.tb-open::after {
    content: "";
    position: absolute;
    right: 0;
    top: 4px;
    bottom: 4px;
    width: 4px;
    background: #57a65c;
}
.tb-open-thin::after {
    width: 2px;
}
.tb-bottom {
    display: flex;
    flex-direction: column;
    align-items: center;
}
.weather {
    display: flex;
    flex-direction: column;
    align-items: center;
    font-size: 13.5px;
    line-height: 18px;
}
.weather svg {
    margin-bottom: -2px;
}
.weather-badge {
    font-family: "Open Sans", sans-serif;
    font-size: 8px;
    font-weight: 700;
    fill: #fff;
}
.word-w {
    font-family: "Open Sans", sans-serif;
    font-size: 10px;
    font-weight: 700;
    fill: #fff;
}
.tray-chevron {
    margin: 24px 28px 0 0;
}
.tray {
    margin-top: 10px;
    display: flex;
    gap: 6px;
}
.clock {
    margin-top: 15px;
    font-size: 11.3px;
    line-height: 17px;
    text-align: center;
    white-space: nowrap;
}
.notify {
    position: relative;
    height: 34px;
    margin-top: 18px;
}
.notify-count {
    position: absolute;
    left: 8px;
    top: 7px;
    width: 17px;
    height: 17px;
    border-radius: 50%;
    background: #3a3f46;
    border: 1px solid #222;
    font-size: 11px;
    font-weight: 600;
    line-height: 15px;
    text-align: center;
}

/* search flyout */
.search {
    position: absolute;
    left: 1074px;
    top: 0;
    width: 784px;
    height: 640px;
    display: flex;
    flex-direction: column;
    z-index: 5;
    box-shadow: 0 2px 8px rgba(0, 0, 0, .5);
    color: #f2f2f2;
}
.search-head {
    height: 52px;
    flex: none;
    display: flex;
    align-items: center;
    background: linear-gradient(90deg, #424446, #494a4c);
    border-bottom: 1px solid #3b3c3e;
    padding-left: 13px;
    font-size: 12.6px;
    color: #d4d4d4;
}
.stab {
    height: 100%;
    display: flex;
    align-items: center;
    padding: 0 13px;
    white-space: nowrap;
}
.stab-on {
    font-weight: 600;
    color: #f4f4f4;
    border-bottom: 4px solid #107c10;
    padding: 4px 12px 0;
}
.caret {
    margin-left: 7px;
}
.head-dots {
    margin-left: auto;
}
.head-close {
    margin: 0 24px 0 28px;
}
.search-body {
    flex: 1;
    display: flex;
    min-height: 0;
    background: #2e2f30;
}
.results {
    width: 344px;
    flex: none;
    background: linear-gradient(90deg, #464646 0, #424242 60%, #2c2d2e 100%);
}
.res-section {
    height: 32px;
    line-height: 32px;
    padding: 1px 0 0 12px;
    font-size: 12.6px;
    font-weight: 600;
    color: #f0f0f0;
}
.res-row {
    position: relative;
    height: 36px;
    display: flex;
    align-items: center;
    padding-left: 12px;
}
.res-icon {
    width: 16px;
    flex: none;
}
.res-name {
    margin-left: 12px;
    font-size: 14px;
    font-weight: 400;
    white-space: nowrap;
}
.res-name b {
    font-weight: 700;
}
.chev {
    position: absolute;
    right: 22px;
    top: 50%;
    margin-top: -6px;
}
.res-best {
    height: 64px;
}
.res-text {
    margin-left: 14px;
}
.res-text .res-name {
    margin-left: 0;
    line-height: 24px;
}
.res-sub {
    font-size: 12.6px;
    line-height: 22px;
    color: #cfcfcf;
}
.res-selected {
    border: 1px solid #fff;
    padding-left: 11px;
    background: linear-gradient(90deg, #3e5d3e, #3e613e 50%, #224422);
}
.res-web {
    height: 58px;
    align-items: flex-start;
    padding-top: 9px;
}
.res-web .res-name {
    white-space: normal;
    width: 210px;
    line-height: 20px;
}
.res-web .chev {
    margin-top: -7px;
}
.res-more {
    font-size: 12.6px;
    color: #cfcfcf;
}
.preview {
    flex: 1;
    margin: 12px 12px 0;
    background: #1b1c1d;
}
.preview-top {
    height: 178px;
    border-bottom: 2px solid #a3a5a5;
    display: flex;
    flex-direction: column;
    align-items: center;
    padding-top: 28px;
}
.preview-title {
    margin-top: 21px;
    font-size: 17px;
    line-height: 26px;
    white-space: nowrap;
}
.preview-sub {
    margin-top: 4px;
    font-size: 12.6px;
    color: #d0d0d0;
    line-height: 20px;
}
.preview-actions {
    padding: 12px 0 0 24px;
}
.act {
    height: 32px;
    display: flex;
    align-items: center;
    font-size: 12.3px;
    color: #efefef;
}
.act svg {
    width: 16px;
    flex: none;
    margin: -4px 12px 0 0;
}
.search-input {
    height: 40px;
    flex: none;
    background: #fff;
    border: 2px solid #107c10;
    display: flex;
    align-items: center;
    padding-left: 11px;
    color: #1a1a1a;
    font-size: 14px;
}
.search-text {
    margin-left: 11px;
}
.search-caret {
    width: 1px;
    height: 20px;
    background: #000;
}
```
